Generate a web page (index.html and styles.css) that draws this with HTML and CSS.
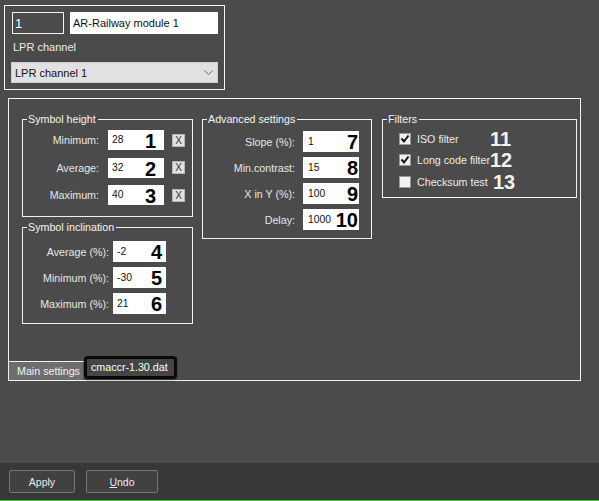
FILE: index.html
```html
<!DOCTYPE html>
<html>
<head>
<meta charset="utf-8">
<link rel="stylesheet" href="styles.css">
</head>
<body>
<div class="page">
  <div class="content">
    <div class="top-panel">
      <div class="id-row">
        <div class="tb tb-dark">1</div>
        <div class="tb tb-light">AR-Railway module 1</div>
      </div>
      <div class="lbl-lpr">LPR channel</div>
      <div class="select">
        <span>LPR channel 1</span>
        <svg class="chev" width="9" height="5" viewBox="0 0 9 5"><polyline points="0.5,0.5 4.5,4.5 8.5,0.5" fill="none" stroke="#6a6a6a" stroke-width="1"/></svg>
      </div>
    </div>

    <div class="main-panel">
      <div class="groups">
        <div class="col col-left">
          <div class="group g-height">
            <div class="gtitle">Symbol height</div>
            <div class="rows">
              <div class="row"><span class="label">Minimum:</span><div class="field"><span class="val">28</span><span class="ann">1</span></div><span class="xbtn">X</span></div>
              <div class="row"><span class="label">Average:</span><div class="field"><span class="val">32</span><span class="ann">2</span></div><span class="xbtn">X</span></div>
              <div class="row"><span class="label">Maximum:</span><div class="field"><span class="val">40</span><span class="ann">3</span></div><span class="xbtn">X</span></div>
            </div>
          </div>
          <div class="group g-incl">
            <div class="gtitle">Symbol inclination</div>
            <div class="rows">
              <div class="row"><span class="label">Average (%):</span><div class="field"><span class="val">-2</span><span class="ann">4</span></div></div>
              <div class="row"><span class="label">Minimum (%):</span><div class="field"><span class="val">-30</span><span class="ann">5</span></div></div>
              <div class="row"><span class="label">Maximum (%):</span><div class="field"><span class="val">21</span><span class="ann">6</span></div></div>
            </div>
          </div>
        </div>

        <div class="col col-mid">
          <div class="group g-adv">
            <div class="gtitle">Advanced settings</div>
            <div class="rows">
              <div class="row"><span class="label">Slope (%):</span><div class="field"><span class="val">1</span><span class="ann">7</span></div></div>
              <div class="row"><span class="label">Min.contrast:</span><div class="field"><span class="val">15</span><span class="ann">8</span></div></div>
              <div class="row"><span class="label">X in Y (%):</span><div class="field"><span class="val">100</span><span class="ann">9</span></div></div>
              <div class="row"><span class="label">Delay:</span><div class="field"><span class="val">1000</span><span class="ann">10</span></div></div>
            </div>
          </div>
        </div>

        <div class="col col-right">
          <div class="group g-filters">
            <div class="gtitle">Filters</div>
            <div class="checks">
              <div class="check-row">
                <span class="cb checked"><svg width="10" height="10" viewBox="0 0 10 10"><polyline points="1.5,4.5 4,7.5 8.5,1.5" fill="none" stroke="#111" stroke-width="2"/></svg></span>
                <span class="cb-label">ISO filter</span><span class="ann-w">11</span>
              </div>
              <div class="check-row">
                <span class="cb checked"><svg width="10" height="10" viewBox="0 0 10 10"><polyline points="1.5,4.5 4,7.5 8.5,1.5" fill="none" stroke="#111" stroke-width="2"/></svg></span>
                <span class="cb-label">Long code filter</span><span class="ann-w">12</span>
              </div>
              <div class="check-row">
                <span class="cb"></span>
                <span class="cb-label">Checksum test</span><span class="ann-w ann-shift">13</span>
              </div>
            </div>
          </div>
        </div>
      </div>

      <div class="tabs">
        <div class="tab tab-main">Main settings</div>
        <div class="tab tab-file">cmaccr-1.30.dat</div>
      </div>
    </div>
  </div>

  <div class="bottom-bar">
    <div class="btn btn-apply">Apply</div>
    <div class="btn btn-undo"><span class="ul">U</span>ndo</div>
  </div>
</div>
</body>
</html>
```

FILE: styles.css
```css
* { box-sizing: border-box; }
html, body {
  margin: 0;
  padding: 0;
  background: #4b4b4b;
}
body {
  font-family: "Liberation Sans", Arial, sans-serif;
  font-size: 10.7px;
  color: #e8e8e8;
}
.page {
  width: 599px;
  height: 501px;
  display: flex;
  flex-direction: column;
  overflow: hidden;
}
.content {
  flex: 1;
  display: flex;
  flex-direction: column;
}

/* top panel */
.top-panel {
  margin: 5px 0 0 4px;
  width: 221px;
  height: 85px;
  border: 1px solid #f2f2f2;
  padding: 6px 0 0 6px;
  display: flex;
  flex-direction: column;
}
.id-row {
  display: flex;
  gap: 6px;
  margin-left: 1px;
}
.tb {
  height: 22px;
  display: flex;
  align-items: center;
}
.tb-dark {
  width: 52px;
  border: 1px solid #f2f2f2;
  background: #4b4b4b;
  color: #ffffff;
  font-size: 13px;
  padding-left: 2px;
}
.tb-light {
  width: 148px;
  background: #ffffff;
  color: #111;
  font-size: 11px;
  padding-left: 3px;
}
.lbl-lpr {
  margin: 7px 0 0 2px;
  line-height: 13px;
  font-size: 11px;
  color: #ececec;
}
.select {
  margin-top: 8px;
  width: 207px;
  height: 21px;
  background: #e1e1e1;
  border: 1px solid #cfcfcf;
  color: #111;
  font-size: 11px;
  display: flex;
  align-items: center;
  justify-content: space-between;
  padding: 0 4px 0 3px;
}
.chev { display: block; }

/* main panel */
.main-panel {
  margin: 8px 0 0 8px;
  width: 573px;
  height: 283px;
  border: 1px solid #f2f2f2;
  display: flex;
  flex-direction: column;
}
.groups {
  display: flex;
  padding: 20px 0 0 13px;
  align-items: flex-start;
}
.col { display: flex; flex-direction: column; }
.col-left { width: 171px; gap: 10px; }
.col-mid { width: 170px; margin-left: 9px; }
.col-right { width: 195px; margin-left: 10px; }

.group {
  border: 1px solid #f2f2f2;
  display: flex;
  flex-direction: column;
}
.gtitle {
  width: fit-content;
  margin: -7px 0 0 4px;
  padding: 0 2px 0 1px;
  line-height: 13px;
  background: #4b4b4b;
  color: #f4f4f4;
}
.rows { display: flex; flex-direction: column; }
.row {
  display: flex;
  align-items: center;
}
.label {
  text-align: right;
  flex: none;
  color: #e6e6e6;
}
.field {
  background: #ffffff;
  color: #111;
  display: flex;
  justify-content: space-between;
  align-items: flex-start;
  flex: none;
  overflow: visible;
}
.val {
  font-size: 10.3px;
  line-height: 12px;
  align-self: center;
  padding-left: 4px;
}
.ann {
  font-size: 20px;
  font-weight: bold;
  line-height: 16px;
  color: #000;
  margin-top: 3px;
}
.xbtn {
  width: 13px;
  height: 13px;
  margin-left: 8px;
  background: #e1e1e1;
  border: 1px solid #b5b5b5;
  color: #333;
  font-size: 10px;
  line-height: 11px;
  text-align: center;
  flex: none;
}

/* symbol height */
.g-height .rows { margin-top: 4px; gap: 7.5px; padding-bottom: 11px; }
.g-height .label { width: 76px; margin-right: 9px; }
.g-height .field { width: 56px; height: 20px; padding-right: 8px; }

/* symbol inclination */
.g-incl .rows { margin-top: 7px; gap: 5px; padding-bottom: 9px; }
.g-incl .label { width: 86px; margin-right: 4px; }
.g-incl .field { width: 53px; height: 21px; padding-right: 4px; }

/* advanced */
.g-adv .rows { margin-top: 5px; gap: 5px; padding-bottom: 8px; }
.g-adv .label { width: 92px; margin-right: 8px; }
.g-adv .field { width: 56px; height: 21px; padding-right: 1px; }
.g-adv .val { padding-left: 5px; }

/* filters */
.g-filters { height: 79px; }
.checks {
  display: flex;
  flex-direction: column;
  margin-top: 2px;
  padding-left: 16px;
}
.check-row {
  display: flex;
  align-items: center;
  height: 21.5px;
}
.cb {
  width: 12px;
  height: 12px;
  flex: none;
  background: #f0f0f0;
  border: 1px solid #9a9a9a;
  display: flex;
  align-items: center;
  justify-content: center;
  margin-right: 6px;
}
.cb svg { display: block; }
.cb-label {
  width: 73px;
  flex: none;
  white-space: nowrap;
  color: #ececec;
}
.ann-w {
  font-size: 20px;
  font-weight: bold;
  line-height: 20px;
  color: #f4f4f4;
}
.ann-shift { margin-left: 3px; }

/* tabs */
.tabs {
  margin-top: auto;
  display: flex;
  align-items: flex-end;
}
.tab { white-space: nowrap; }
.tab-main {
  width: 75px;
  height: 19px;
  border-top: 1px solid #f2f2f2;
  border-right: 1px solid #5a5a5a;
  background: #6e6e6e;
  color: #f2f2f2;
  padding-left: 8px;
  line-height: 18px;
}
.tab-file {
  width: 93px;
  height: 23px;
  margin-bottom: 1px;
  border: 3px solid #0a0a0a;
  border-radius: 4px;
  background: #454545;
  color: #ffffff;
  padding-left: 4px;
  line-height: 17px;
  box-shadow: 0 1px 2px rgba(0,0,0,0.4);
}

/* bottom bar */
.bottom-bar {
  height: 38px;
  background: #383838;
  border-bottom: 1px solid #3fc33f;
  display: flex;
  align-items: flex-start;
  padding: 7px 0 0 9px;
  gap: 11px;
}
.btn {
  height: 23px;
  background: #414141;
  border: 1px solid #767676;
  border-radius: 2px;
  color: #ececec;
  font-size: 10.5px;
  display: flex;
  align-items: center;
  justify-content: center;
}
.btn-apply { width: 66px; }
.btn-undo { width: 72px; }
.ul { text-decoration: underline; }
```
